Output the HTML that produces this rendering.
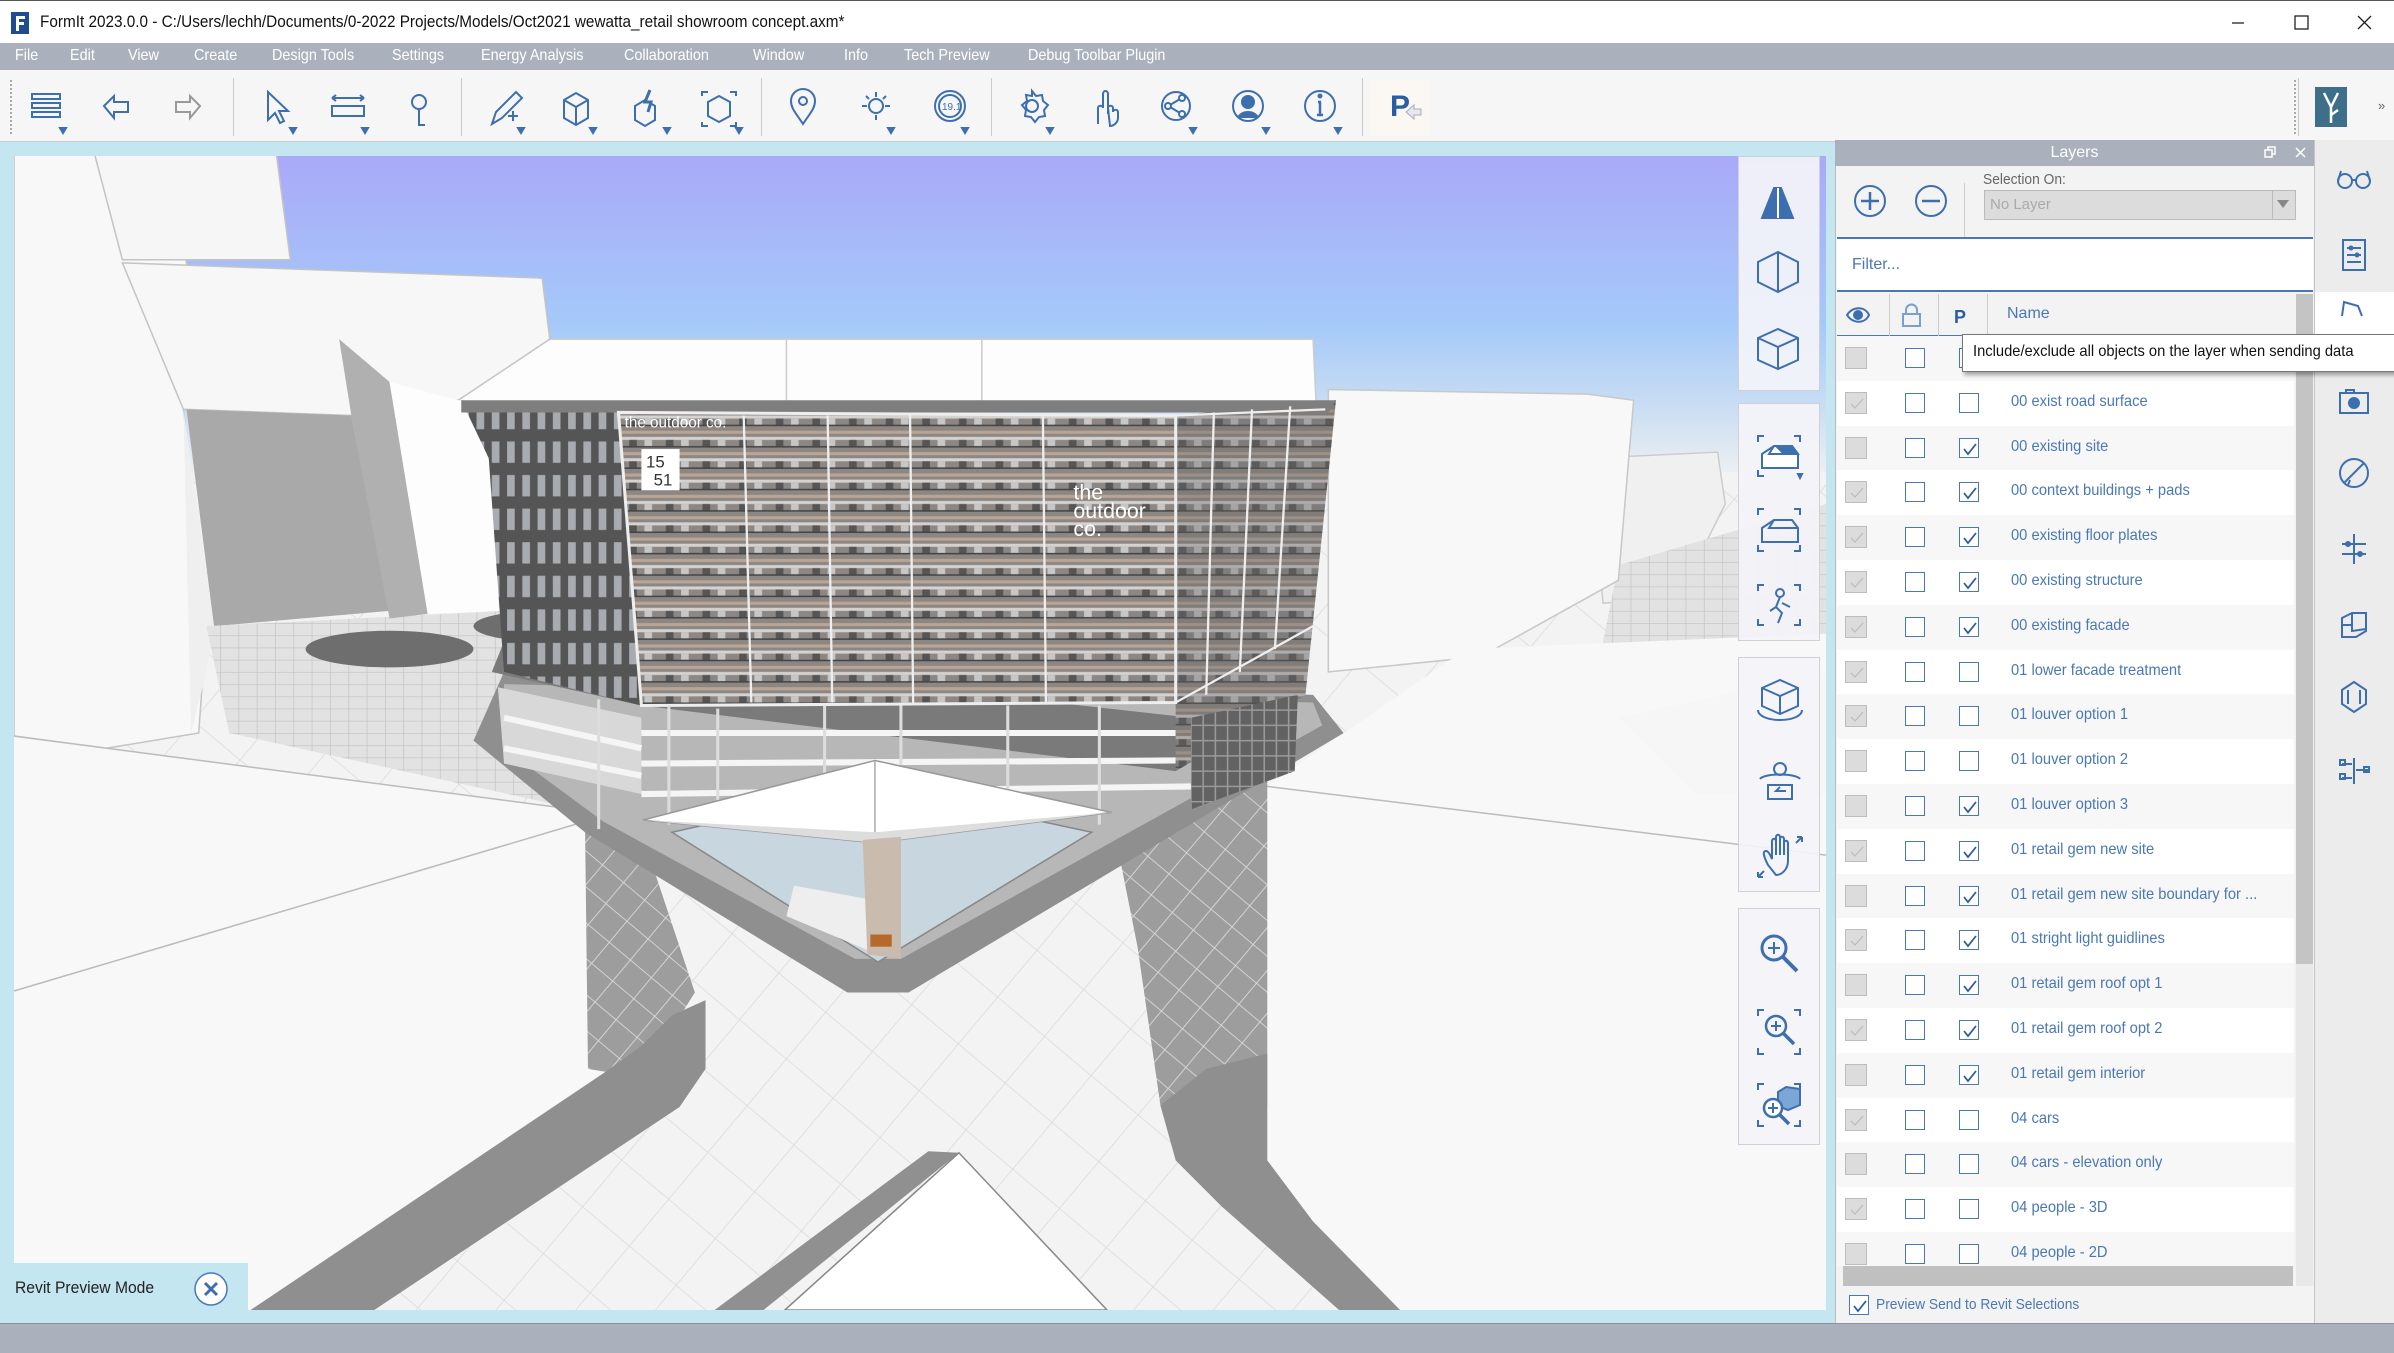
<!DOCTYPE html>
<html><head><meta charset="utf-8">
<style>
*{margin:0;padding:0;box-sizing:border-box}
body{width:2394px;height:1353px;position:relative;overflow:hidden;background:#f3f3f3;font-family:"Liberation Sans",sans-serif}
.a{position:absolute}
#title{left:0;top:0;width:2394px;height:43px;background:#fff;border-top:1px solid #555}
#title .t{left:40px;top:11px;font-size:17px;color:#111;white-space:nowrap;transform:scaleX(.9);transform-origin:left}
#menu{left:0;top:43px;width:2394px;height:27px;background:#aab1bd}
#menu span{position:absolute;top:4px;font-size:16px;color:#fff;white-space:nowrap;transform:scaleX(.9);transform-origin:left}
#tb{left:0;top:70px;width:2394px;height:72px;background:#f6f6f6;border-bottom:1px solid #ccc}
.sep{position:absolute;top:8px;width:1px;height:58px;background:#ccc}
#vp{left:0;top:142px;width:1837px;height:1181px;background:#c3e6f1}
#status{left:0;top:1323px;width:2394px;height:30px;background:#aab1bd;border-top:1px solid #8a919c}
#lp{left:1835px;top:140px;width:479px;height:1183px;background:#f3f3f3;border-left:1px solid #bbb}
#lh{left:1835px;top:140px;width:479px;height:26px;background:#aab1bd;color:#fff;font-size:16px;text-align:center;line-height:26px}
.row{position:absolute;left:1837px;width:457px;height:45px;background:#fff}
.row.g{background:#f7f7f7}
.vb{position:absolute;left:8px;top:11px;width:22px;height:22px;background:#dcdcdc;border:1px solid #bdbdbd}
.lb{position:absolute;left:68px;top:12px;width:20px;height:20px;border:1.5px solid #4a78b5;background:#fff}
.sb{position:absolute;left:122px;top:12px;width:20px;height:20px;border:1.5px solid #4a78b5;background:#fff}
.nm{position:absolute;left:174px;top:12px;font-size:16px;color:#4a78b5;white-space:nowrap;transform:scaleX(.92);transform-origin:left}
.ck{position:absolute;left:2px;top:2px}
#side{left:2314px;top:140px;width:80px;height:1183px;background:#ececec;border-left:1px solid #c4c4c4}
.vg{position:absolute;left:1738px;width:82px;background:rgba(244,244,248,.92);border:1px solid #d0d0d8}
</style></head><body>

<div id="title" class="a">
<svg class="a" style="left:11px;top:11px" width="18" height="22"><rect width="18" height="22" fill="#1e4c8c"/><path d="M5 4h9v3H8v3h5v3H8v6H5z" fill="#fff"/></svg>
<div class="t a">FormIt 2023.0.0 - C:/Users/lechh/Documents/0-2022 Projects/Models/Oct2021 wewatta_retail showroom concept.axm*</div>
<svg class="a" style="left:2228px;top:12px" width="160" height="20" stroke="#222" stroke-width="1.3" fill="none"><path d="M4 10h12"/><rect x="67" y="3" width="13" height="13"/><path d="M130 3l13 13M143 3l-13 13"/></svg>
</div>

<div id="menu" class="a">
<span style="left:15px">File</span><span style="left:70px">Edit</span><span style="left:128px">View</span><span style="left:194px">Create</span><span style="left:272px">Design Tools</span><span style="left:392px">Settings</span><span style="left:481px">Energy Analysis</span><span style="left:624px">Collaboration</span><span style="left:753px">Window</span><span style="left:844px">Info</span><span style="left:904px">Tech Preview</span><span style="left:1028px">Debug Toolbar Plugin</span>
</div>

<div id="tb" class="a">
<div class="a" style="left:10px;top:10px;width:2px;height:54px;border-left:2px dotted #aaa"></div>
<div class="sep" style="left:233px"></div><div class="sep" style="left:461px"></div><div class="sep" style="left:761px"></div><div class="sep" style="left:991px"></div><div class="sep" style="left:1362px"></div><div class="sep" style="left:2298px"></div>
<div class="a" style="left:2294px;top:10px;width:2px;height:54px;border-left:2px dotted #aaa"></div>
<svg class="a" style="left:0;top:0" width="1420" height="72" fill="none" stroke="#3d6fae" stroke-width="2">
<g><rect x="32" y="24" width="28" height="5"/><rect x="32" y="33" width="28" height="5"/><rect x="32" y="42" width="28" height="5"/><path d="M60 58l6 0-3 5z" fill="#3d6fae"/></g>
<path d="M104 36l10-10v6h14v10h-14v6z"/>
<path d="M200 36l-10-10v6h-14v10h14v6z" stroke="#999"/>
<path d="M268 22l0 28 7-7 5 10 4-2-5-10 9 0z"/><path d="M290 58l6 0-3 5z" fill="#3d6fae"/>
<path d="M332 28h32M332 28l4-3M332 28l4 3M364 28l-4-3M364 28l-4 3"/><rect x="332" y="36" width="32" height="10"/><path d="M362 58l6 0-3 5z" fill="#3d6fae"/>
<circle cx="419" cy="32" r="7"/><path d="M419 39v16h6"/>
<path d="M492 54l4-12 20-20 6 6-20 20zM508 46h10M513 41v10"/><path d="M518 58l6 0-3 5z" fill="#3d6fae"/>
<path d="M564 30l12-7 12 7v18l-12 7-12-7zM564 30l12 7 12-7M576 37v18"/><path d="M590 58l6 0-3 5z" fill="#3d6fae"/>
<path d="M635 36l10-6 10 6v14l-10 6-10-6z"/><path d="M650 20l-5 12 6 0-3 10" stroke-width="3"/><path d="M664 58l6 0-3 5z" fill="#3d6fae"/>
<path d="M702 26v-4h6M730 22h6v4M702 52v4h6M736 52v4h-6"/><path d="M708 32l11-6 11 6v14l-11 6-11-6z"/><path d="M736 58l6 0-3 5z" fill="#3d6fae"/>
<path d="M803 54c-8-12-12-16-12-23a12 12 0 0124 0c0 7-4 11-12 23z"/><circle cx="803" cy="31" r="4"/>
<circle cx="876" cy="36" r="7"/><path d="M876 22v5M876 45v5M862 36h5M885 36h5M866 26l3 3M886 26l-3 3"/><path d="M888 58l6 0-3 5z" fill="#3d6fae"/>
<circle cx="950" cy="36" r="15"/><circle cx="950" cy="36" r="11"/><text x="942" y="40" font-size="10" fill="#3d6fae" stroke="none" font-family="Liberation Sans">19.1</text><path d="M962 58l6 0-3 5z" fill="#3d6fae"/>
<circle cx="1032" cy="36" r="6"/><path d="M1032 21l4 5 6-1 1 6 5 4-4 5 1 6-6 1-4 5-4-5-6-1 1-6-4-5 5-4-1-6 6 1z"/><path d="M1047 58l6 0-3 5z" fill="#3d6fae"/>
<path d="M1098 54v-16c0-3 5-3 5 0v-14c0-4 5-4 5 0v20M1108 38c0-3 5-3 5 0v4c0-3 5-3 5 0v6c0 4-4 8-8 8z"/>
<circle cx="1176" cy="36" r="14"/><circle cx="1168" cy="36" r="3"/><circle cx="1182" cy="28" r="3"/><circle cx="1182" cy="44" r="3"/><path d="M1170 35l10-6M1170 37l10 6"/><path d="M1190 58l6 0-3 5z" fill="#3d6fae"/>
<circle cx="1248" cy="36" r="15"/><circle cx="1248" cy="32" r="6" fill="#3d6fae"/><path d="M1238 48c3-8 17-8 20 0" fill="#3d6fae"/><path d="M1263 58l6 0-3 5z" fill="#3d6fae"/>
<circle cx="1320" cy="36" r="15"/><path d="M1320 32v13M1317 45h6M1318 32h3" stroke-width="2.5"/><circle cx="1320" cy="26" r="1.5" fill="#3d6fae"/><path d="M1335 58l6 0-3 5z" fill="#3d6fae"/>
</svg>
<div class="a" style="left:1370px;top:10px;width:60px;height:56px;background:#fbf7f3"></div>
<div class="a" style="left:1390px;top:20px;font-size:30px;font-weight:bold;color:#2b5ea1">P</div>
<svg class="a" style="left:1404px;top:32px" width="20" height="20"><path d="M2 10l8-7v4h7v6h-7v4z" fill="#e7e7ef" stroke="#aab"/></svg>
<div class="a" style="left:2315px;top:17px;width:32px;height:40px;background:#3d6f8a"></div>
<svg class="a" style="left:2315px;top:17px" width="32" height="40" stroke="#fff" stroke-width="2.5" fill="none"><path d="M9 6l7 14v16M23 6l-7 14"/><path d="M16 28l7-5"/></svg>
<div class="a" style="left:2378px;top:28px;font-size:13px;color:#666">»</div>
</div>

<div id="vp" class="a"></div>
<svg class="a" style="left:14px;top:156px" width="1812" height="1154" viewBox="9 102 1187 756" preserveAspectRatio="none">
<defs>
<linearGradient id="sky" x1="0" y1="0" x2="0" y2="1"><stop offset="0" stop-color="#aaa7f8"/><stop offset=".55" stop-color="#a5c9f9"/><stop offset=".8" stop-color="#c9ddf3"/><stop offset="1" stop-color="#eceff2"/></linearGradient>
<pattern id="grid" width="12" height="8" patternUnits="userSpaceOnUse"><rect width="12" height="8" fill="#e2e2e2"/><path d="M0 0h12M0 0v8" stroke="#c6c6c6" stroke-width="1"/></pattern>
<pattern id="lgrid" width="40" height="40" patternUnits="userSpaceOnUse" patternTransform="rotate(40)"><rect width="40" height="40" fill="#f3f3f3"/><path d="M0 0h40M0 0v40" stroke="#dadada" stroke-width="1"/></pattern>
<pattern id="dgrid" width="18" height="18" patternUnits="userSpaceOnUse" patternTransform="rotate(40)"><rect width="18" height="18" fill="#9d9d9d"/><path d="M0 0h18M0 0v18" stroke="#d8d8d8" stroke-width="1.2"/></pattern>
<pattern id="fac" width="24" height="14" patternUnits="userSpaceOnUse"><rect width="24" height="14" fill="#8d8784"/><rect y="2" width="24" height="2" fill="#b9a595"/><rect y="6" width="24" height="2" fill="#d6d2cf"/><rect x="4" y="8" width="5" height="5" fill="#555"/><rect x="14" y="8" width="5" height="5" fill="#c7c7c7"/><rect y="12" width="24" height="1" fill="#444"/></pattern>
<pattern id="wing" width="10" height="22" patternUnits="userSpaceOnUse"><rect width="10" height="22" fill="#555"/><rect x="2" y="3" width="5" height="14" fill="#a8acb0"/></pattern>
<pattern id="wing2" width="8" height="10" patternUnits="userSpaceOnUse"><rect width="8" height="10" fill="#626262"/><path d="M0 5h8M4 0v10" stroke="#9a9a9a"/></pattern>
</defs>
<rect x="0" y="0" width="1300" height="900" fill="url(#lgrid)"/>
<rect x="0" y="94" width="1300" height="215" fill="url(#sky)"/>
<!-- right distant -->
<polygon points="1040,300 1125,296 1130,330 1100,390 1050,395" fill="#f0f0f0" stroke="#ccc"/>
<polygon points="1060,370 1196,330 1196,420 1080,470 1040,470" fill="url(#grid)"/>
<polygon points="870,255 1040,258 1070,262 1060,380 970,430 870,440" fill="#f8f8f8" stroke="#c8c8c8"/>
<!-- backdrop -->
<polygon points="222,222 860,222 862,265 300,265" fill="#fdfdfd" stroke="#ccc"/>
<line x1="515" y1="222" x2="515" y2="262" stroke="#ccc"/><line x1="643" y1="222" x2="643" y2="262" stroke="#ccc"/>
<!-- left towers -->
<polygon points="9,94 110,94 120,160 135,250 120,268 135,410 130,480 9,500" fill="#f8f8f8" stroke="#c4c4c4"/>
<polygon points="60,94 180,94 190,170 80,170" fill="#f6f6f6" stroke="#c4c4c4"/>
<polygon points="80,172 355,182 360,222 300,262 230,272 122,268 120,268" fill="#f7f7f7" stroke="#c4c4c4"/>
<polygon points="122,268 230,272 255,400 140,410" fill="#a9a9a9"/>
<polygon points="120,268 140,410 135,440 125,480" fill="#efefef"/>
<polygon points="135,410 330,400 345,470 150,480" fill="url(#grid)"/>
<ellipse cx="255" cy="425" rx="55" ry="12" fill="#6e6e6e"/>
<ellipse cx="355" cy="410" rx="45" ry="10" fill="#6e6e6e"/>
<polygon points="222,222 255,250 280,402 255,405 230,272" fill="#b0b0b0"/>
<polygon points="255,250 300,262 330,262 330,400 280,402" fill="#fdfdfd"/>
<polygon points="150,480 360,430 400,500 383,531" fill="url(#grid)"/>
<!-- left fore block -->
<polygon points="9,482 383,531 385,700 403,703 330,760 245,858 9,858" fill="#f8f8f8"/>
<line x1="9" y1="482" x2="383" y2="531" stroke="#bbb"/>
<line x1="9" y1="649" x2="383" y2="538" stroke="#bbb"/>
<polygon points="383,535 420,545 455,650 430,690 403,703 385,700" fill="url(#dgrid)"/>
<polygon points="164,858 395,703 420,685 440,665 462,655 462,700 445,725 245,858" fill="#8f8f8f"/>
<!-- right fore block -->
<polygon points="830,515 960,425 1196,415 1196,858 917,858 860,800 830,760" fill="#f8f8f8"/>
<line x1="830" y1="515" x2="1196" y2="560" stroke="#bbb"/>
<polygon points="1060,470 1196,440 1196,520 1110,520" fill="#f6f6f6"/>
<polygon points="725,520 830,440 830,724 760,724 745,620" fill="url(#dgrid)"/>
<polygon points="760,724 790,700 830,690 830,760 860,800 917,858 877,858 800,790 770,760" fill="#8f8f8f"/>
<!-- bottom center -->
<polygon points="468,858 608,754 628,755 500,858" fill="#909090"/>
<polygon points="514,858 628,755 725,858" fill="#fff" stroke="#888"/>
<!-- podium -->
<polygon points="310,485 330,440 860,455 880,480 595,650 555,650 383,545" fill="#8f8f8f"/>
<polygon points="330,448 860,460 866,475 590,628 560,628 395,538 330,490" fill="#b7b7b7"/>
<!-- building -->
<polygon points="322,440 420,462 770,505 780,470 330,420" fill="#7a7a7a"/>
<polygon points="326,450 420,470 420,520 330,500" fill="#d8d8d8"/>
<path d="M330,470 L420,490 M330,490 L420,508 M420,480 L770,480 M420,500 L770,498 M420,520 L780,515" stroke="#f5f5f5" stroke-width="4"/>
<polygon points="302,262 405,270 420,462 330,440 320,300" fill="url(#wing)"/>
<polygon points="405,270 770,272 770,460 420,462" fill="url(#fac)"/>
<polygon points="770,272 875,262 855,455 770,505" fill="url(#fac)"/>
<polygon points="770,272 875,262 855,455 770,505" fill="#666" opacity=".35"/>
<polygon points="302,262 875,262 870,270 302,270" fill="#7e7e7e"/>
<polygon points="405,270 770,272 770,460 420,462" fill="none" stroke="#eee" stroke-width="2"/>
<path d="M487,272 L492,460 M542,272 L545,460 M596,272 L598,460 M683,272 L685,460 M770,272 L770,460 L860,410 M770,272 L868,268 M795,270 L790,455 M820,268 L812,440 M845,266 L835,425" stroke="#eee" stroke-width="1.5" fill="none"/>
<path d="M392 458v85M438 462v78M470 464v80M540 462v78M590 462v78M660 462v78M720 462v78" stroke="#ddd" stroke-width="2"/>
<polygon points="780,470 850,455 848,505 780,530" fill="url(#wing2)"/>
<rect x="420" y="294" width="25" height="27" fill="#fff"/>
<text x="423" y="306" font-size="11" fill="#333" font-family="Liberation Sans">15</text><text x="428" y="318" font-size="11" fill="#333" font-family="Liberation Sans">51</text>
<text x="409" y="280" font-size="10" fill="#fff" font-family="Liberation Sans">the outdoor co.</text>
<text x="703" y="327" font-size="14" fill="#fff" font-family="Liberation Sans">the</text>
<text x="703" y="339" font-size="14" fill="#fff" font-family="Liberation Sans">outdoor</text>
<text x="703" y="351" font-size="14" fill="#fff" font-family="Liberation Sans">co.</text>
<!-- retail gem -->
<polygon points="440,545 575,515 715,545 575,630" fill="#c8d6e0" stroke="#888"/>
<polygon points="520,580 575,590 575,625 515,600" fill="#eee"/>
<polygon points="421,537 573,498 728,532 573,552" fill="#fff" stroke="#999"/>
<polygon points="421,537 573,552 728,532 573,545" fill="#ddd"/>
<line x1="573" y1="498" x2="573" y2="545" stroke="#aaa"/>
<polygon points="565,550 590,548 590,628 568,625" fill="#c9bbae"/>
<rect x="570" y="612" width="14" height="8" fill="#b66a2a"/>
</svg>
<!-- nav toolbar -->
<div class="vg" style="top:156px;height:235px"></div>
<div class="vg" style="top:403px;height:238px"></div>
<div class="vg" style="top:657px;height:235px"></div>
<div class="vg" style="top:908px;height:237px"></div>
<svg class="a" style="left:1738px;top:150px" width="82" height="1000" fill="none" stroke="#3d6fae" stroke-width="2">
<path d="M24 68l12-30 7 0 12 30z" fill="#3d6fae"/><path d="M40 38v30" stroke="#fff"/>
<path d="M20 112l20-10 20 10v20l-20 10-20-10zM40 102v40"/>
<path d="M20 188l20-9 20 9v22l-20 9-20-9zM20 188l20 9 20-9M40 197v22"/>
<g transform="translate(0,8)"><path d="M20 284v-6h6M56 278h6v6M20 312v6h6"/><path d="M24 296l12-8 18 0 6 8v14h-36z" fill="#fff"/><path d="M36 288l-5 8h29" /><path d="M38 288l8 8h14l-6-8z" fill="#3d6fae"/><path d="M60 316l4 0-2 4z" fill="#3d6fae"/></g>
<g transform="translate(0,30)"><path d="M20 335v-6h6M56 329h6v6M20 365v6h6M62 365v6h-6"/><path d="M24 348l12-8 18 0 6 8v14h-36z"/><path d="M36 340l-5 8h29"/></g>
<g transform="translate(0,55)"><path d="M20 386v-6h6M56 380h6v6M20 414v6h6M62 414v6h-6"/><circle cx="42" cy="388" r="4"/><path d="M42 392l-4 10 6 6-4 10M38 402l-6 4M44 398l8 4"/></g>
<g transform="translate(0,88)"><path d="M24 450l18-8 18 8v18l-18 8-18-8zM24 450l18 8 18-8M42 458v18"/><path d="M20 472c0 6 10 10 22 10s22-4 22-10" /></g>
<g transform="translate(0,117)"><circle cx="42" cy="502" r="6"/><path d="M30 518h24v14h-24zM22 512c4-6 36-6 40 0M48 524h-10l4-4"/></g>
<g transform="translate(0,125)"><path d="M30 590c-4-8-6-14-2-14 3 0 5 6 6 8v-18c0-3 4-3 4 0v14-18c0-3 4-3 4 0v18-16c0-3 4-3 4 0v16-12c0-3 4-3 4 0v18c0 8-6 14-12 14z"/><path d="M20 602l6-6M20 602v-5M20 602h5M64 562l-6 6M64 562v5M64 562h-5"/></g>
<g transform="translate(0,13)"><circle cx="36" cy="785" r="12" stroke-width="3"/><path d="M45 794l14 14" stroke-width="4"/><path d="M36 779v12M30 785h12"/></g>
<g transform="translate(0,38)"><path d="M20 828v-6h6M56 822h6v6M20 860v6h6M62 860v6h-6"/><circle cx="38" cy="838" r="10" stroke-width="2.5"/><path d="M45 845l11 11" stroke-width="3.5"/><path d="M38 833v10M33 838h10"/></g>
<g transform="translate(0,62)"><path d="M20 878v-6h6M56 872h6v6M20 908v6h6M62 908v6h-6"/><path d="M40 880l8-5 14 2v16l-12 5-10-4z" fill="#7aa6d8"/><circle cx="35" cy="896" r="9" fill="#fff" stroke-width="2.5"/><path d="M41 902l10 10" stroke-width="3.5"/><path d="M35 891v10M30 896h10"/></g>
</svg>
<!-- revit preview -->
<div class="a" style="left:0;top:1263px;width:248px;height:60px;background:#c3e6f1"></div>
<div class="a" style="left:15px;top:1278px;font-size:17px;color:#222;transform:scaleX(.92);transform-origin:left;white-space:nowrap">Revit Preview Mode</div>
<svg class="a" style="left:193px;top:1271px" width="36" height="36"><circle cx="18" cy="18" r="16" fill="#fff" stroke="#4a78b5" stroke-width="1.5"/><path d="M12 12l12 12M24 12l-12 12" stroke="#3d6fae" stroke-width="3"/></svg>

<div id="status" class="a"></div>

<!-- layers panel -->
<div id="lp" class="a"></div>
<div id="lh" class="a">Layers</div>
<svg class="a" style="left:2262px;top:145px" width="50" height="16" stroke="#fff" fill="none" stroke-width="1.5"><rect x="3" y="5" width="7" height="7"/><path d="M6 5V2h7v7h-3"/><path d="M34 3l9 9M43 3l-9 9"/></svg>
<svg class="a" style="left:1850px;top:180px" width="110" height="44" fill="none" stroke="#3d6fae" stroke-width="2"><circle cx="20" cy="21" r="15"/><path d="M20 12v18M11 21h18" stroke-width="2.5"/><circle cx="81" cy="21" r="15"/><path d="M72 21h18" stroke-width="2.5"/></svg>
<div class="a" style="left:1964px;top:183px;width:1px;height:60px;background:#ccc"></div>
<div class="a" style="left:1983px;top:171px;font-size:15px;color:#666;transform:scaleX(.92);transform-origin:left">Selection On:</div>
<div class="a" style="left:1984px;top:190px;width:312px;height:30px;background:#dcdcdc;border:1px solid #bbb"></div>
<div class="a" style="left:1990px;top:196px;font-size:15px;color:#aaa">No Layer</div>
<div class="a" style="left:2272px;top:191px;width:1px;height:28px;background:#bbb"></div>
<svg class="a" style="left:2276px;top:199px" width="14" height="10"><path d="M1 1h12l-6 8z" fill="#888"/></svg>
<div class="a" style="left:1837px;top:237px;width:476px;height:55px;background:#fff;border-top:2px solid #4a78b5;border-bottom:2px solid #4a78b5"></div>
<div class="a" style="left:1852px;top:256px;font-size:16px;color:#4a78b5">Filter...</div>
<div class="a" style="left:1837px;top:294px;width:459px;height:42px;background:#f3f3f3;border-bottom:1px solid #4a78b5"></div>
<div class="a" style="left:1889px;top:294px;width:1px;height:42px;background:#ccc"></div>
<div class="a" style="left:1938px;top:294px;width:1px;height:42px;background:#ccc"></div>
<div class="a" style="left:1987px;top:294px;width:1px;height:42px;background:#ccc"></div>
<svg class="a" style="left:1846px;top:303px" width="140" height="26" fill="none" stroke="#3d6fae" stroke-width="2"><path d="M1 12c6-9 18-9 22 0-4 9-16 9-22 0z"/><circle cx="12" cy="12" r="4" fill="#3d6fae"/><rect x="57" y="11" width="17" height="12" stroke="#7aa0d0"/><path d="M60 11V7a5 5 0 0111 0v4" stroke="#7aa0d0"/><text x="108" y="20" font-size="18" font-weight="bold" fill="#2b5ea1" stroke="none" font-family="Liberation Sans">P</text></svg>
<div class="a" style="left:2007px;top:305px;font-size:16px;color:#4a78b5">Name</div>
<div class="a" style="left:2296px;top:294px;width:17px;height:670px;background:#c4c4c4"></div>
<div class="a" style="left:2296px;top:964px;width:17px;height:322px;background:#e8e8e8"></div>

<div class="row g" style="top:336px"><div class="vb"></div><div class="lb"></div><div class="sb"></div></div>
<div class="row" style="top:381px"><div class="vb"><svg class="ck" width="18" height="18"><path d="M3 9l4 4 8-9" stroke="#bbb" fill="none" stroke-width="1.2"/></svg></div><div class="lb"></div><div class="sb"></div><div class="nm">00 exist road surface</div></div>
<div class="row g" style="top:426px"><div class="vb"></div><div class="lb"></div><div class="sb"><svg class="ck" width="16" height="16"><path d="M2 8l4 5 8-10" stroke="#2b5ea1" fill="none" stroke-width="1.8"/></svg></div><div class="nm">00 existing site</div></div>
<div class="row" style="top:470px"><div class="vb"><svg class="ck" width="18" height="18"><path d="M3 9l4 4 8-9" stroke="#bbb" fill="none" stroke-width="1.2"/></svg></div><div class="lb"></div><div class="sb"><svg class="ck" width="16" height="16"><path d="M2 8l4 5 8-10" stroke="#2b5ea1" fill="none" stroke-width="1.8"/></svg></div><div class="nm">00 context buildings + pads</div></div>
<div class="row g" style="top:515px"><div class="vb"><svg class="ck" width="18" height="18"><path d="M3 9l4 4 8-9" stroke="#bbb" fill="none" stroke-width="1.2"/></svg></div><div class="lb"></div><div class="sb"><svg class="ck" width="16" height="16"><path d="M2 8l4 5 8-10" stroke="#2b5ea1" fill="none" stroke-width="1.8"/></svg></div><div class="nm">00 existing floor plates</div></div>
<div class="row" style="top:560px"><div class="vb"><svg class="ck" width="18" height="18"><path d="M3 9l4 4 8-9" stroke="#bbb" fill="none" stroke-width="1.2"/></svg></div><div class="lb"></div><div class="sb"><svg class="ck" width="16" height="16"><path d="M2 8l4 5 8-10" stroke="#2b5ea1" fill="none" stroke-width="1.8"/></svg></div><div class="nm">00 existing structure</div></div>
<div class="row g" style="top:605px"><div class="vb"><svg class="ck" width="18" height="18"><path d="M3 9l4 4 8-9" stroke="#bbb" fill="none" stroke-width="1.2"/></svg></div><div class="lb"></div><div class="sb"><svg class="ck" width="16" height="16"><path d="M2 8l4 5 8-10" stroke="#2b5ea1" fill="none" stroke-width="1.8"/></svg></div><div class="nm">00 existing facade</div></div>
<div class="row" style="top:650px"><div class="vb"><svg class="ck" width="18" height="18"><path d="M3 9l4 4 8-9" stroke="#bbb" fill="none" stroke-width="1.2"/></svg></div><div class="lb"></div><div class="sb"></div><div class="nm">01 lower facade treatment</div></div>
<div class="row g" style="top:694px"><div class="vb"><svg class="ck" width="18" height="18"><path d="M3 9l4 4 8-9" stroke="#bbb" fill="none" stroke-width="1.2"/></svg></div><div class="lb"></div><div class="sb"></div><div class="nm">01 louver option 1</div></div>
<div class="row" style="top:739px"><div class="vb"></div><div class="lb"></div><div class="sb"></div><div class="nm">01 louver option 2</div></div>
<div class="row g" style="top:784px"><div class="vb"></div><div class="lb"></div><div class="sb"><svg class="ck" width="16" height="16"><path d="M2 8l4 5 8-10" stroke="#2b5ea1" fill="none" stroke-width="1.8"/></svg></div><div class="nm">01 louver option 3</div></div>
<div class="row" style="top:829px"><div class="vb"><svg class="ck" width="18" height="18"><path d="M3 9l4 4 8-9" stroke="#bbb" fill="none" stroke-width="1.2"/></svg></div><div class="lb"></div><div class="sb"><svg class="ck" width="16" height="16"><path d="M2 8l4 5 8-10" stroke="#2b5ea1" fill="none" stroke-width="1.8"/></svg></div><div class="nm">01 retail gem new site</div></div>
<div class="row g" style="top:874px"><div class="vb"></div><div class="lb"></div><div class="sb"><svg class="ck" width="16" height="16"><path d="M2 8l4 5 8-10" stroke="#2b5ea1" fill="none" stroke-width="1.8"/></svg></div><div class="nm">01 retail gem new site boundary for ...</div></div>
<div class="row" style="top:918px"><div class="vb"><svg class="ck" width="18" height="18"><path d="M3 9l4 4 8-9" stroke="#bbb" fill="none" stroke-width="1.2"/></svg></div><div class="lb"></div><div class="sb"><svg class="ck" width="16" height="16"><path d="M2 8l4 5 8-10" stroke="#2b5ea1" fill="none" stroke-width="1.8"/></svg></div><div class="nm">01 stright light guidlines</div></div>
<div class="row g" style="top:963px"><div class="vb"></div><div class="lb"></div><div class="sb"><svg class="ck" width="16" height="16"><path d="M2 8l4 5 8-10" stroke="#2b5ea1" fill="none" stroke-width="1.8"/></svg></div><div class="nm">01 retail gem roof opt 1</div></div>
<div class="row" style="top:1008px"><div class="vb"><svg class="ck" width="18" height="18"><path d="M3 9l4 4 8-9" stroke="#bbb" fill="none" stroke-width="1.2"/></svg></div><div class="lb"></div><div class="sb"><svg class="ck" width="16" height="16"><path d="M2 8l4 5 8-10" stroke="#2b5ea1" fill="none" stroke-width="1.8"/></svg></div><div class="nm">01 retail gem roof opt 2</div></div>
<div class="row g" style="top:1053px"><div class="vb"></div><div class="lb"></div><div class="sb"><svg class="ck" width="16" height="16"><path d="M2 8l4 5 8-10" stroke="#2b5ea1" fill="none" stroke-width="1.8"/></svg></div><div class="nm">01 retail gem interior</div></div>
<div class="row" style="top:1098px"><div class="vb"><svg class="ck" width="18" height="18"><path d="M3 9l4 4 8-9" stroke="#bbb" fill="none" stroke-width="1.2"/></svg></div><div class="lb"></div><div class="sb"></div><div class="nm">04 cars</div></div>
<div class="row g" style="top:1142px"><div class="vb"></div><div class="lb"></div><div class="sb"></div><div class="nm">04 cars - elevation only</div></div>
<div class="row" style="top:1187px"><div class="vb"><svg class="ck" width="18" height="18"><path d="M3 9l4 4 8-9" stroke="#bbb" fill="none" stroke-width="1.2"/></svg></div><div class="lb"></div><div class="sb"></div><div class="nm">04 people - 3D</div></div>
<div class="row g" style="top:1232px;height:34px;overflow:hidden"><div class="vb"></div><div class="lb"></div><div class="sb"></div><div class="nm">04 people - 2D</div></div>
<div class="a" style="left:1843px;top:1266px;width:450px;height:20px;background:#c0c0c0"></div>
<div class="a" style="left:1849px;top:1295px;width:20px;height:20px;border:1.5px solid #4a78b5;background:#fff"><svg class="ck" width="16" height="16"><path d="M2 8l4 5 8-10" stroke="#2b5ea1" fill="none" stroke-width="1.8"/></svg></div>
<div class="a" style="left:1876px;top:1296px;font-size:15px;color:#4a78b5;transform:scaleX(.92);transform-origin:left;white-space:nowrap">Preview Send to Revit Selections</div>

<!-- right sidebar -->
<div id="side" class="a"></div>
<div class="a" style="left:2315px;top:292px;width:79px;height:42px;background:#fff"></div>
<svg class="a" style="left:2314px;top:140px" width="80" height="660" fill="none" stroke="#3d6fae" stroke-width="2">
<g><circle cx="31" cy="41" r="7"/><circle cx="49" cy="41" r="7"/><path d="M38 40h4M24 41l3-10M56 41l-3-10"/></g>
<g><rect x="29" y="100" width="22" height="30"/><path d="M33 108h14M33 115h14M33 122h14"/><circle cx="37" cy="108" r="1.5" fill="#3d6fae"/><circle cx="43" cy="115" r="1.5" fill="#3d6fae"/></g>
<g><path d="M28 176l2-14 14 4 4 10"/></g>
<g><rect x="26" y="253" width="28" height="20"/><circle cx="40" cy="263" r="5" fill="#3d6fae"/><path d="M32 253v-3h8v3"/></g>
<g><circle cx="40" cy="333" r="14"/><path d="M30 343l20-20M34 345l2-5"/></g>
<g><path d="M40 394v30M28 404h24M28 414h24"/><circle cx="34" cy="404" r="2"/><circle cx="46" cy="414" r="2"/></g>
<g><path d="M28 478l10-5 14 0v18l-10 6h-14z"/><path d="M38 473v18l14-2M28 485h10"/></g>
<g><path d="M28 550l12-8 12 8v14l-12 8-12-8z"/><path d="M34 550v14M46 550v14"/></g>
<g><path d="M40 618v26M28 624h10M28 638h10M42 630h12"/><rect x="26" y="620" width="5" height="5"/><rect x="26" y="634" width="5" height="5"/><rect x="50" y="627" width="5" height="5"/></g>
</svg>

<!-- tooltip -->
<div class="a" style="left:1962px;top:334px;width:440px;height:38px;background:#fff;border:1px solid #777;box-shadow:2px 3px 4px rgba(0,0,0,.35)"></div>
<div class="a" style="left:1973px;top:343px;font-size:16px;color:#111;white-space:nowrap;transform:scaleX(.92);transform-origin:left">Include/exclude all objects on the layer when sending data</div>
</body></html>
